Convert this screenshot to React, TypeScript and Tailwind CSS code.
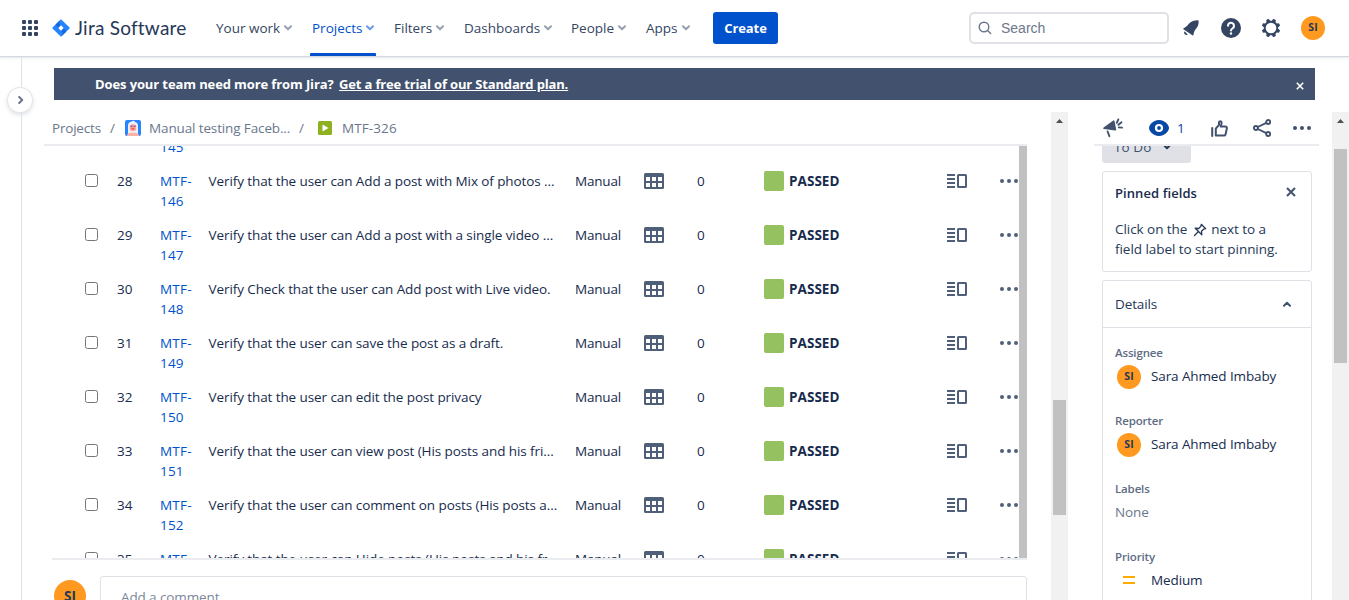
import React from 'react';

type IconProps = { className?: string };

const Chevron = ({ className = '' }: IconProps) => (
  <svg width="8" height="6" viewBox="0 0 8 6" className={className} fill="none" stroke="currentColor" strokeWidth="2" strokeLinecap="round" strokeLinejoin="round">
    <path d="M1 1.2 4 4.2 7 1.2" />
  </svg>
);

const AppSwitcher = () => (
  <svg width="16" height="16" viewBox="0 0 16 16" fill="#344563">
    {[0, 6, 12].map((y) => [0, 6, 12].map((x) => <rect key={`${x}-${y}`} x={x} y={y} width="4" height="4" rx="1" />))}
  </svg>
);

const JiraMark = () => (
  <svg width="18" height="18" viewBox="0 0 18 18">
    <path d="M9 0.3 17.3 8.3a1 1 0 0 1 0 1.4L9 17.8 0.7 9.7a1 1 0 0 1 0-1.4z" fill="#2684ff" />
    <path d="M9 0.3c-2 2-2 4.2 0 6.2L6.4 9 3.6 5.6z" fill="#1868db" />
    <path d="M9 17.8c2-2 2-4.2 0-6.2L11.600 9l2.800 3.400z" fill="#1868db" />
    <path d="M9 6.300 11.700 9 9 11.700 6.300 9z" fill="#fff" />
  </svg>
);

const SearchIcon = () => (
  <svg width="14" height="14" viewBox="0 0 14 14" fill="none" stroke="#6b778c" strokeWidth="1.400" strokeLinecap="round">
    <circle cx="6" cy="6" r="4.800" />
    <path d="m9.600 9.600 3 3" />
  </svg>
);

const BellIcon = () => (
  <svg width="18" height="18" viewBox="0 0 18 18" fill="#344563">
    <path d="M1.700 9.200C4.600 8.200 6 5.600 8.200 3.600c2.200-1.900 4.800-2.200 7.300-2.400.8-.1 1.200.3 1.200 1.100-.1 2.500-.5 5-2.300 7-1.700 1.900-2.600 3.800-3 6.700-.1.600-.6.700-1 .3L1.400 10.200c-.4-.4-.2-.8.3-1z" />
    <path d="M2.600 12.300a2.200 2.200 0 0 0 3.100 3.100z" />
  </svg>
);

const HelpIcon = () => (
  <svg width="20" height="20" viewBox="0 0 20 20">
    <circle cx="10" cy="10" r="10" fill="#344563" />
    <path d="M7 7.800a3 3 0 1 1 4.700 2.400C10.500 11 10 11.400 10 12.400" fill="none" stroke="#fff" strokeWidth="2" strokeLinecap="round" />
    <circle cx="10" cy="15.500" r="1.200" fill="#fff" />
  </svg>
);

const GearIcon = () => (
  <svg width="20" height="20" viewBox="-10 -10 20 20" fill="#344563">
    {[22.5, 67.5, 112.5, 157.5, 202.5, 247.5, 292.5, 337.5].map((a) => (
      <path key={a} d="M-2.200 -6 -1.500 -8.800a.7.7 0 0 1 .7-.500H.8a.7.7 0 0 1 .7.5L2.200 -6z" transform={`rotate(${a})`} />
    ))}
    <circle r="6.300" fill="#fff" stroke="#344563" strokeWidth="1.900" />
  </svg>
);

const Megaphone = () => (
  <svg width="20" height="20" viewBox="0 0 20 20" fill="#42526e">
    <path d="M0.600 9.500 10.300 2.500a.8.8 0 0 1 1.200.4l1.700 8.700c.1.600-.3 1-.9.900L0.900 11c-.8-.1-1-.9-.3-1.500z" />
    <path d="M4.600 13.500 6.400 18.200M13.800 4.800 15.300 1.400M15.500 6.800 18.500 4.300M15.800 9.400l3.200.2" fill="none" stroke="#42526e" strokeWidth="1.900" strokeLinecap="round" />
  </svg>
);

const EyeIcon = () => (
  <svg width="20" height="16" viewBox="0 0 20 16">
    <path d="M10 0C4.500 0 0 4.800 0 8s4.500 8 10 8 10-4.800 10-8-4.500-8-10-8z" fill="#0747a6" />
    <circle cx="10" cy="8" r="3" fill="none" stroke="#fff" strokeWidth="2.200" />
  </svg>
);

const ThumbIcon = () => (
  <svg width="17" height="17" viewBox="0 0 17 17" fill="none" stroke="#42526e" strokeWidth="2" strokeLinejoin="round" strokeLinecap="round">
    <path d="M1.200 8v8" />
    <path d="M4.800 15.600V8.600L8 4.800V2.300c0-1.500 2.600-1.500 2.600.3 0 1.500-.6 2.600-.9 4h4.600c1.300 0 1.800.9 1.500 2l-1.200 5.600c-.2.900-.8 1.400-1.700 1.400z" />
  </svg>
);

const ShareIcon = () => (
  <svg width="18" height="18" viewBox="0 0 18 18" fill="none" stroke="#42526e" strokeWidth="1.900">
    <circle cx="2.900" cy="9" r="2" />
    <circle cx="15.200" cy="3" r="2" />
    <circle cx="15.200" cy="15" r="2" />
    <path d="m4.800 8 8.500-4.200M4.800 10l8.500 4.200" />
  </svg>
);

const Dots = ({ className = '' }: IconProps) => (
  <svg width="18" height="4" viewBox="0 0 18 4" className={className} fill="currentColor">
    <circle cx="2" cy="2" r="2" />
    <circle cx="9" cy="2" r="2" />
    <circle cx="16" cy="2" r="2" />
  </svg>
);

const TableIcon = () => (
  <svg width="20" height="16" viewBox="0 0 20 16">
    <rect width="20" height="16" rx="1.500" fill="#505f79" />
    {[4, 10].map((y) => [2, 8, 14].map((x) => <rect key={`${x}-${y}`} x={x} y={y} width="4" height="4" fill="#fff" />))}
  </svg>
);

const DetailViewIcon = () => (
  <svg width="20" height="14" viewBox="0 0 20 14">
    <path d="M0 1h8M0 5h8M0 9h8M0 13h8" stroke="#505f79" strokeWidth="2" />
    <rect x="11" y="1" width="8" height="12" rx=".5" fill="none" stroke="#505f79" strokeWidth="2" />
  </svg>
);

const PinIcon = () => (
  <svg width="14" height="14" viewBox="0 0 14 14" className="ml-[2px] mr-[1px] inline-block" fill="none" stroke="#253858" strokeWidth="1.300" strokeLinejoin="round" strokeLinecap="round">
    <path d="M8.300 1.300 12.700 5.700 10.600 6.200 8.500 8.300 8.800 11.800 2.200 5.200 5.700 5.500 7.800 3.400zM5.200 8.800 1.500 12.500" />
  </svg>
);

const ProjectAvatar = () => (
  <svg width="16" height="16" viewBox="0 0 16 16">
    <rect width="16" height="16" rx="2" fill="#2684ff" />
    <path d="M3 14.500V6C3 3 4.500 2.300 6.500 1.600L9 .600l.8 1.200c2.300.6 3.200 2.200 3.200 4.200v8.500z" fill="#eef1f8" />
    <rect x="4.800" y="4.300" width="6.400" height="6.700" rx="2.500" fill="#ffa39a" />
    <path d="M2 16c0-2.200 1.500-3.200 3.500-3.200h5c2 0 3.500 1 3.500 3.200z" fill="#ffb3a8" />
    <path d="M5.500 6.300h2M8.600 6.300h2" stroke="#5e4db2" strokeWidth="1.100" />
    <path d="M6.800 8.800h2.400" stroke="#de350b" strokeWidth="1" />
  </svg>
);

const PlayType = () => (
  <svg width="14" height="14" viewBox="0 0 14 14">
    <rect width="14" height="14" rx="1.500" fill="#8eb021" />
    <path d="M4.500 3.500v7l6-3.500z" fill="#fff" />
  </svg>
);

const Arrow = () => (
  <svg width="7" height="4" viewBox="0 0 7 4" fill="#505050">
    <path d="M3.500 0 7 4H0z" />
  </svg>
);

const Cross = ({ size }: { size: number }) => (
  <svg width={size} height={size} viewBox="0 0 10 10" fill="none" stroke="currentColor" strokeWidth="2">
    <path d="m1 1 8 8M9 1 1 9" />
  </svg>
);

const Avatar = ({ className }: { className: string }) => (
  <span className={`flex shrink-0 items-center justify-center rounded-full bg-[#ff991f] font-bold tracking-normal text-[#253858] ${className}`}>SI</span>
);

const nav = [
  { label: 'Your work', width: 'w-[96px]' },
  { label: 'Projects', width: 'w-[82px]', active: true },
  { label: 'Filters', width: 'w-[70px]' },
  { label: 'Dashboards', width: 'w-[107px]' },
  { label: 'People', width: 'w-[75px]' },
  { label: 'Apps', width: 'w-[67px]' },
];

const rows = [
  { n: 27, id: 145, text: '' },
  { n: 28, id: 146, text: 'Verify that the user can Add a post with Mix of photos ...' },
  { n: 29, id: 147, text: 'Verify that the user can Add a post with a single video ...' },
  { n: 30, id: 148, text: 'Verify Check that the user can Add post with Live video.' },
  { n: 31, id: 149, text: 'Verify that the user can save the post as a draft.' },
  { n: 32, id: 150, text: 'Verify that the user can edit the post privacy' },
  { n: 33, id: 151, text: 'Verify that the user can view post (His posts and his fri...' },
  { n: 34, id: 152, text: 'Verify that the user can comment on posts (His posts a...' },
  { n: 35, id: 153, text: 'Verify that the user can Hide posts (His posts and his fr...' },
];

function Header() {
  return (
    <header className="relative z-10 flex h-14 shrink-0 items-center bg-white pl-[22px] shadow-[0_1px_1px_#d5d8de,0_2px_3px_#e8eaee]">
      <AppSwitcher />
      <div className="ml-[14px] flex w-[164px] items-center gap-[5px]">
        <JiraMark />
        <span className="whitespace-nowrap font-[Lato] text-[19px] leading-6 tracking-[0.230px] text-[#253858]">Jira Software</span>
      </div>
      <nav className="flex h-full text-[13.500px] font-medium tracking-normal text-[#344563]">
        {nav.map((item) => (
          <div key={item.label} className={`${item.width} h-full shrink-0`}>
            <div className={`relative flex h-full w-fit items-center gap-1 whitespace-nowrap ${item.active ? 'text-[#0052cc]' : ''}`}>
              <span>{item.label}</span>
              <Chevron className={item.active ? 'text-[#6a9ce6]' : 'text-[#97a0af]'} />
              {item.active && <span className="absolute -left-[2px] -right-[2px] bottom-0 h-[3px] rounded-t-[1px] bg-[#0052cc]" />}
            </div>
          </div>
        ))}
      </nav>
      <button className="h-8 w-[65px] shrink-0 rounded-[3px] bg-[#0052cc] pt-px text-[13px] font-bold tracking-[-0.1px] text-white">Create</button>
      <div className="ml-auto mr-6 flex items-center">
        <div className="flex h-8 w-[200px] items-center gap-[9px] rounded-[5px] border-2 border-[#dfe1e6] pl-[7px] font-['Liberation_Sans'] text-sm tracking-normal text-[#6b778c]">
          <SearchIcon />
          Search
        </div>
        <div className="ml-[13px]"><BellIcon /></div>
        <div className="ml-[21px]"><HelpIcon /></div>
        <div className="ml-5"><GearIcon /></div>
        <Avatar className="ml-5 size-6 text-[10.500px]" />
      </div>
    </header>
  );
}

function Row({ n, id, text }: { n: number; id: number; text: string }) {
  return (
    <div className="flex h-[54px] shrink-0 whitespace-nowrap leading-5 text-[#172b4d]">
      <span className="mr-[19px] mt-[3px] size-[13px] shrink-0 rounded-[2.500px] border border-[#767676] bg-white" />
      <span className="w-[43px] shrink-0 tracking-normal">{n}</span>
      <span className="w-[48.500px] shrink-0 tracking-[0.2px] text-[#0052cc]">MTF-<br />{id}</span>
      <span className="w-[366.500px] shrink-0 tracking-[-0.090px]">{text}</span>
      <span className="w-[69px] shrink-0 tracking-[-0.2px]">Manual</span>
      <span className="mt-[2px] w-[53px] shrink-0"><TableIcon /></span>
      <span className="w-[67px] shrink-0">0</span>
      <span className="flex h-5 w-[183px] shrink-0 gap-[5px]">
        <i className="size-5 rounded-[2px] bg-[#95c160]" />
        <b className="font-bold tracking-[0.050px]">PASSED</b>
      </span>
      <span className="mt-[3px] w-[53px] shrink-0"><DetailViewIcon /></span>
      <Dots className="mt-2 shrink-0 text-[#505f79]" />
    </div>
  );
}

function Field({ label, children }: { label: string; children: React.ReactNode }) {
  return (
    <div className="h-[68px]">
      <div className="text-[11.500px] font-semibold leading-4 tracking-[-0.150px] text-[#5e6c84]">{label}</div>
      <div className="flex h-8 items-center text-[#172b4d]">{children}</div>
    </div>
  );
}

const personName = <span className="-mt-[2px] whitespace-nowrap">Sara Ahmed Imbaby</span>;

function IssuePanel() {
  return (
    <div className="flex w-[1029px] shrink-0 flex-col">
      <div className="flex h-8 shrink-0 items-center pl-[30px] text-[#6b778c]">
        <span className="w-[58px] tracking-[-0.2px]">Projects</span>
        <span className="w-[15px]">/</span>
        <ProjectAvatar />
        <span className="ml-2 w-[150px] whitespace-nowrap tracking-[-0.130px]">Manual testing Faceb...</span>
        <span className="w-[19px]">/</span>
        <PlayType />
        <span className="ml-[10px] tracking-[0.1px]">MTF-326</span>
      </div>
      <div className="ml-[22px] h-[2px] w-[983px] shrink-0 bg-[#ebecf0]" />
      <div className="flex h-[412px] w-[1005px] shrink-0 justify-between overflow-hidden">
        <div className="-mt-[29px] ml-[63px] flex flex-col">
          {rows.map((r) => <Row key={r.n} {...r} />)}
        </div>
        <div className="w-2 shrink-0 bg-[#c1c1c1]" />
      </div>
      <div className="ml-[30px] h-[2px] w-[975px] shrink-0 bg-[#ebecf0]" />
      <div className="ml-8 mt-4 flex h-10 w-[973px] shrink-0">
        <Avatar className="mt-1 size-8 text-[13.500px]" />
        <div className="ml-[14px] h-12 grow rounded-[3px] border border-[#dfe1e6] pl-5 pt-[10px] leading-5 text-[#7a869a]">Add a comment...</div>
      </div>
    </div>
  );
}

function Sidebar() {
  return (
    <div className="flex w-[238px] shrink-0 flex-col">
      <div className="flex h-8 shrink-0 items-center pl-[9px]">
        <Megaphone />
        <span className="ml-[26px]"><EyeIcon /></span>
        <span className="ml-2 w-[34px] text-[#0747a6]">1</span>
        <ThumbIcon />
        <span className="ml-[25px]"><ShareIcon /></span>
        <Dots className="ml-[22px] text-[#42526e]" />
      </div>
      <div className="h-[2px] w-[225px] shrink-0 bg-[#ebecf0]" />
      <div className="grow overflow-hidden pl-2">
        <div className="-mt-[15px] flex h-8 w-[89px] items-center gap-[12px] rounded-[3px] bg-[#dfe1e6] pl-3 font-medium tracking-[0.1px] text-[#42526e]">
          To Do
          <Chevron className="text-[#253858]" />
        </div>
        <div className="mt-2 h-[101px] w-[210px] rounded-[3px] border border-[#dfe1e6] px-3 pt-[12px]">
          <div className="flex h-5 items-center justify-between pr-[3px] text-[13px] font-semibold tracking-[0.080px] text-[#172b4d]">
            Pinned fields
            <span className="-mt-[4px] text-[#42526e]"><Cross size={10} /></span>
          </div>
          <p className="mt-[15px] whitespace-nowrap leading-5 tracking-[-0.050px] text-[#253858]">Click on the <PinIcon /> next to a<br />field label to start pinning.</p>
        </div>
        <div className="mt-2 h-[340px] w-[210px] rounded-[3px] border border-[#dfe1e6]">
          <div className="flex h-[47px] items-center justify-between border-b border-[#dfe1e6] pl-3 pr-5 font-medium text-[#253858]">
            Details
            <Chevron className="rotate-180 text-[#42526e]" />
          </div>
          <div className="pl-3 pt-[17px]">
            <Field label="Assignee"><Avatar className="ml-[2px] mr-[10px] size-6 text-[10.500px]" />{personName}</Field>
            <Field label="Reporter"><Avatar className="ml-[2px] mr-[10px] size-6 text-[10.500px]" />{personName}</Field>
            <Field label="Labels"><span className="-mt-[2px] text-[#6b778c]">None</span></Field>
            <Field label="Priority">
              <svg width="12" height="8" viewBox="0 0 12 8" className="-mt-[2px] ml-2 mr-4"><path d="M0 1h12M0 7h12" stroke="#ffab00" strokeWidth="2" /></svg>
              <span className="-mt-[2px]">Medium</span>
            </Field>
          </div>
        </div>
      </div>
    </div>
  );
}

export default function App() {
  return (
    <div className="flex h-[600px] w-[1349px] flex-col overflow-hidden bg-white font-['Open_Sans',sans-serif] text-[13.500px] tracking-[-0.110px]">
      <Header />
      <div className="flex min-h-0 grow">
        <aside className="relative w-[22px] shrink-0 border-r border-[#dfe1e6]">
          <button className="absolute left-2 top-8 flex size-6 items-center justify-center rounded-full bg-white pl-px text-[#6b778c] shadow-[0_0_0_1px_#e4e6ea,0_2px_4px_1px_#dfe1e6]">
            <Chevron className="-rotate-90" />
          </button>
        </aside>
        <main className="flex w-[1327px] flex-col">
          <div className="ml-8 mt-3 flex h-8 w-[1261px] shrink-0 items-center bg-[#42526e] pl-[41px] pr-[11px] text-[13px] font-bold text-white">
            <span className="mt-px whitespace-nowrap">Does your team need more from Jira?</span>
            <a className="ml-[5.500px] mt-px whitespace-nowrap tracking-[-0.160px] underline">Get a free trial of our Standard plan.</a>
            <span className="ml-auto mt-1"><Cross size={8} /></span>
          </div>
          <div className="mt-3 flex min-h-0 grow">
            <IssuePanel />
            <div className="flex w-[17px] shrink-0 flex-col items-center bg-[#f1f1f1] pt-[7px]">
              <Arrow />
              <div className="mt-[277px] h-[115px] w-[13px] shrink-0 bg-[#c1c1c1]" />
            </div>
            <div className="w-[26px] shrink-0" />
            <Sidebar />
            <div className="flex w-[17px] shrink-0 flex-col items-center bg-[#f1f1f1] pt-[7px]">
              <Arrow />
              <div className="mt-[26px] h-[214px] w-[13px] shrink-0 bg-[#c1c1c1]" />
            </div>
          </div>
        </main>
      </div>
    </div>
  );
}
